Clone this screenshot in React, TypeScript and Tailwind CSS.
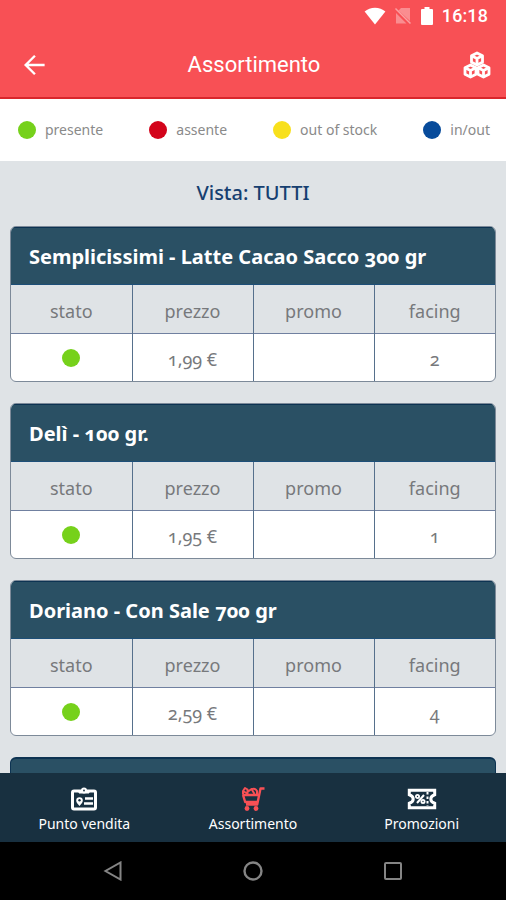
import type { ReactNode } from "react"
import clsx from "clsx"

type Status = "presente" | "assente" | "out of stock" | "in/out"

interface Product {
    name: string
    status: Status
    price: string
    promo: string
    facing: string
}

const statusColors: Record<Status, string> = {
    presente: "bg-[#76d11b]",
    assente: "bg-[#d3041b]",
    "out of stock": "bg-[#f8e01c]",
    "in/out": "bg-[#074b9b]",
}

const legend: Status[] = ["presente", "assente", "out of stock", "in/out"]

const products: Product[] = [
    { name: "Semplicissimi - Latte Cacao Sacco 300 gr", status: "presente", price: "1,99 €", promo: "", facing: "2" },
    { name: "Delì - 100 gr.", status: "presente", price: "1,95 €", promo: "", facing: "1" },
    { name: "Doriano - Con Sale 700 gr", status: "presente", price: "2,59 €", promo: "", facing: "4" },
]

function Dot({ status }: { status: Status }) {
    return <span className={clsx("inline-block size-[18px] shrink-0 rounded-full", statusColors[status])} />
}

function StatusBar() {
    return (
        <div className="flex h-8 items-center justify-end pr-[18px] text-white">
            <svg viewBox="0 0 22 18" className="mr-2 h-[18px] w-[22px]" fill="currentColor">
                <path d="M11 17.5 .6 4.6C3.500 2.100 7 .8 11 .8s7.500 1.300 10.400 3.800z" />
            </svg>
            <svg viewBox="0 0 18 18" className="mr-2 h-[18px] w-[18px]" fill="none">
                <path d="M16 1v13L4.500 3.500 7 1zM2 6l10.500 10.500H2z" fill="#fff" opacity=".35" />
                <path d="M1.500 1.500l15 15" stroke="#fff" strokeWidth="1.500" opacity=".45" />
            </svg>
            <svg viewBox="0 0 14 20" className="mr-2 h-5 w-[14px]" fill="currentColor">
                <path d="M4.500 1h5v2H12a1 1 0 0 1 1 1v14a1 1 0 0 1-1 1H2a1 1 0 0 1-1-1V4a1 1 0 0 1 1-1h2.500z" />
            </svg>
            <span className="font-['Roboto',sans-serif] text-lg leading-5 font-medium [font-variant-numeric:lining-nums]">16:18</span>
        </div>
    )
}

function Cube({ x, y }: { x: number; y: number }) {
    return (
        <g transform={`translate(${x} ${y})`}>
            <path d="M7 1l5.500 2.800v6.400L7 13l-5.500-2.800V3.800z" />
            <path d="M1.500 3.800L7 6.600l5.500-2.800M7 6.600V13" />
        </g>
    )
}

function CubesIcon() {
    return (
        <svg viewBox="0 0 30 28" className="h-7 w-[30px]" fill="none" stroke="#fff" strokeWidth="2.800" strokeLinejoin="round">
            <Cube x={8} y={1} />
            <Cube x={1.5} y={13} />
            <Cube x={14.5} y={13} />
        </svg>
    )
}

function StoreIcon() {
    return (
        <svg viewBox="0 0 28 24" className="h-6 w-7" fill="none" stroke="currentColor" strokeWidth="3">
            <rect x="2.500" y="4" width="23" height="18" rx="1.500" />
            <path d="M9 3.500h10v2.500H9z" fill="currentColor" strokeWidth="1" />
            <circle cx="14" cy="3.500" r="3" fill="currentColor" stroke="none" />
            <circle cx="14" cy="3.500" r=".9" fill="#183040" stroke="none" />
            <path d="M9.500 19c-2.300-2.500-3.300-3.800-3.300-5.500a3.300 3.300 0 0 1 6.600 0c0 1.700-1 3-3.300 5.500z" fill="currentColor" stroke="none" />
            <circle cx="9.500" cy="13.300" r="1.200" fill="#183040" stroke="none" />
            <path d="M15 11.500h8M14 16.500h9" strokeWidth="2.500" />
        </svg>
    )
}

function CartIcon() {
    return (
        <svg viewBox="0 0 26 26" className="h-[26px] w-[26px]" fill="none" stroke="#f85055" strokeWidth="2.400" strokeLinejoin="round">
            <path d="M24.500 2.500h-4l-3.300 16H6M2.500 9h16.500M3 9l2.200 7h12.300" />
            <path d="M3 8.500V5l2-3 2.500 1.500V8M7.500 6l4-3 3 5M11.500 3.500c2.500-1.500 4.500-.5 5.500 1.500v3M3 5l5 3" strokeWidth="2" />
            <circle cx="7" cy="22.500" r="2.400" fill="#f85055" stroke="none" />
            <circle cx="16" cy="22.500" r="2.400" fill="#f85055" stroke="none" />
        </svg>
    )
}

function TicketIcon() {
    return (
        <svg viewBox="0 0 30 24" className="h-6 w-[30px]" fill="none" stroke="currentColor" strokeWidth="3">
            <path d="M2.300 3.300h25.400v4.400c-2.500.8-3.900 2.300-3.900 4.300s1.400 3.500 3.900 4.300v4.400H2.300v-4.400c2.500-.8 3.900-2.300 3.900-4.300s-1.400-3.500-3.900-4.300z" />
            <path d="M20.500 5v14" strokeWidth="2" strokeDasharray="2.500 2" />
            <path d="M17 8l-7 8" strokeWidth="2" />
            <circle cx="10.500" cy="9.500" r="1.600" strokeWidth="1.800" />
            <circle cx="16" cy="14.500" r="1.600" strokeWidth="1.800" />
        </svg>
    )
}

function ProductCard({ product }: { product: Product }) {
    return (
        <section className="overflow-hidden rounded-md border border-[#7d8a99] bg-white">
            <h2 className="border-t border-b border-t-[#0d3352] border-b-[#1d4f78] bg-[#2a5064] pt-[15px] pb-[13px] pl-[18px] text-xl leading-7 font-bold text-white">
                {product.name}
            </h2>
            <table className="w-full table-fixed border-collapse text-center text-[#77797c]">
                <thead>
                    <tr className="h-12 border-b border-[#7080a0] bg-[#dfe3e6] text-lg">
                        <th className="border-r border-[#56708c] pt-1 font-normal">stato</th>
                        <th className="border-r border-[#56708c] pt-1 font-normal">prezzo</th>
                        <th className="border-r border-[#56708c] pt-1 font-normal">promo</th>
                        <th className="pt-1 font-normal">facing</th>
                    </tr>
                </thead>
                <tbody>
                    <tr className="h-12 text-lg">
                        <td className="border-r border-[#56708c] pt-1 leading-none">
                            <Dot status={product.status} />
                        </td>
                        <td className="border-r border-[#56708c] pt-1">{product.price}</td>
                        <td className="border-r border-[#56708c] pt-1">{product.promo}</td>
                        <td className="pt-1">{product.facing}</td>
                    </tr>
                </tbody>
            </table>
        </section>
    )
}

function Tab({ label, icon, active }: { label: string; icon: ReactNode; active?: boolean }) {
    return (
        <button className="flex flex-1 flex-col items-center pt-[11px] text-white" aria-current={active ? "page" : undefined}>
            <span className="flex h-[30px] items-center">{icon}</span>
            <span className="text-sm leading-5">{label}</span>
        </button>
    )
}

export default function App() {
    return (
        <div className="flex h-screen flex-col overflow-hidden bg-[#dfe3e6] font-['Noto_Sans',sans-serif] [font-variant-numeric:oldstyle-nums]">
            <header className="shrink-0 border-b-2 border-[#d9262c] bg-[#f85055] text-white">
                <StatusBar />
                <div className="flex h-[65px] items-center justify-between pr-[14px] pl-[22px]">
                    <button aria-label="Indietro">
                        <svg viewBox="0 0 26 26" className="size-6" fill="none" stroke="currentColor" strokeWidth="2.600">
                            <path d="M24.500 13H5M14 3L4 13l10 10" />
                        </svg>
                    </button>
                    <h1 className="font-['Roboto',sans-serif] text-[22px] leading-7">Assortimento</h1>
                    <button aria-label="Prodotti">
                        <CubesIcon />
                    </button>
                </div>
            </header>

            <ul className="flex h-[62px] shrink-0 items-center justify-between bg-white pr-4 pl-[18px]">
                {legend.map((status) => (
                    <li key={status} className="flex items-center gap-[9px] text-sm text-[#8a8a8a]">
                        <Dot status={status} />
                        {status}
                    </li>
                ))}
            </ul>

            <main className="min-h-0 flex-1 overflow-hidden px-2.5">
                <p className="pt-[18px] pb-[19px] text-center text-xl leading-7 font-medium text-[#163f70]">Vista: TUTTI</p>
                <div className="flex flex-col gap-[21px]">
                    {products.map((product) => (
                        <ProductCard key={product.name} product={product} />
                    ))}
                    <div className="h-40 rounded-md border border-t-2 border-[#0d3352] bg-[#2a5064]" />
                </div>
            </main>

            <nav className="flex h-[69px] shrink-0 bg-[#183040]">
                <Tab label="Punto vendita" icon={<StoreIcon />} />
                <Tab label="Assortimento" icon={<CartIcon />} active />
                <Tab label="Promozioni" icon={<TicketIcon />} />
            </nav>

            <div className="flex h-[58px] shrink-0 items-center justify-center gap-[120px] bg-black text-[#858585]">
                <button aria-label="Back">
                    <svg viewBox="0 0 20 20" className="size-5" fill="none" stroke="currentColor" strokeWidth="2">
                        <path d="M17.500 1.500v17L2.500 10z" />
                    </svg>
                </button>
                <button aria-label="Home">
                    <svg viewBox="0 0 20 20" className="size-5" fill="none" stroke="currentColor" strokeWidth="2.400">
                        <circle cx="10" cy="10" r="8.500" />
                    </svg>
                </button>
                <button aria-label="Recents">
                    <svg viewBox="0 0 20 20" className="size-5" fill="none" stroke="currentColor" strokeWidth="2">
                        <rect x="2" y="2" width="16" height="16" rx="1" />
                    </svg>
                </button>
            </div>
        </div>
    )
}
